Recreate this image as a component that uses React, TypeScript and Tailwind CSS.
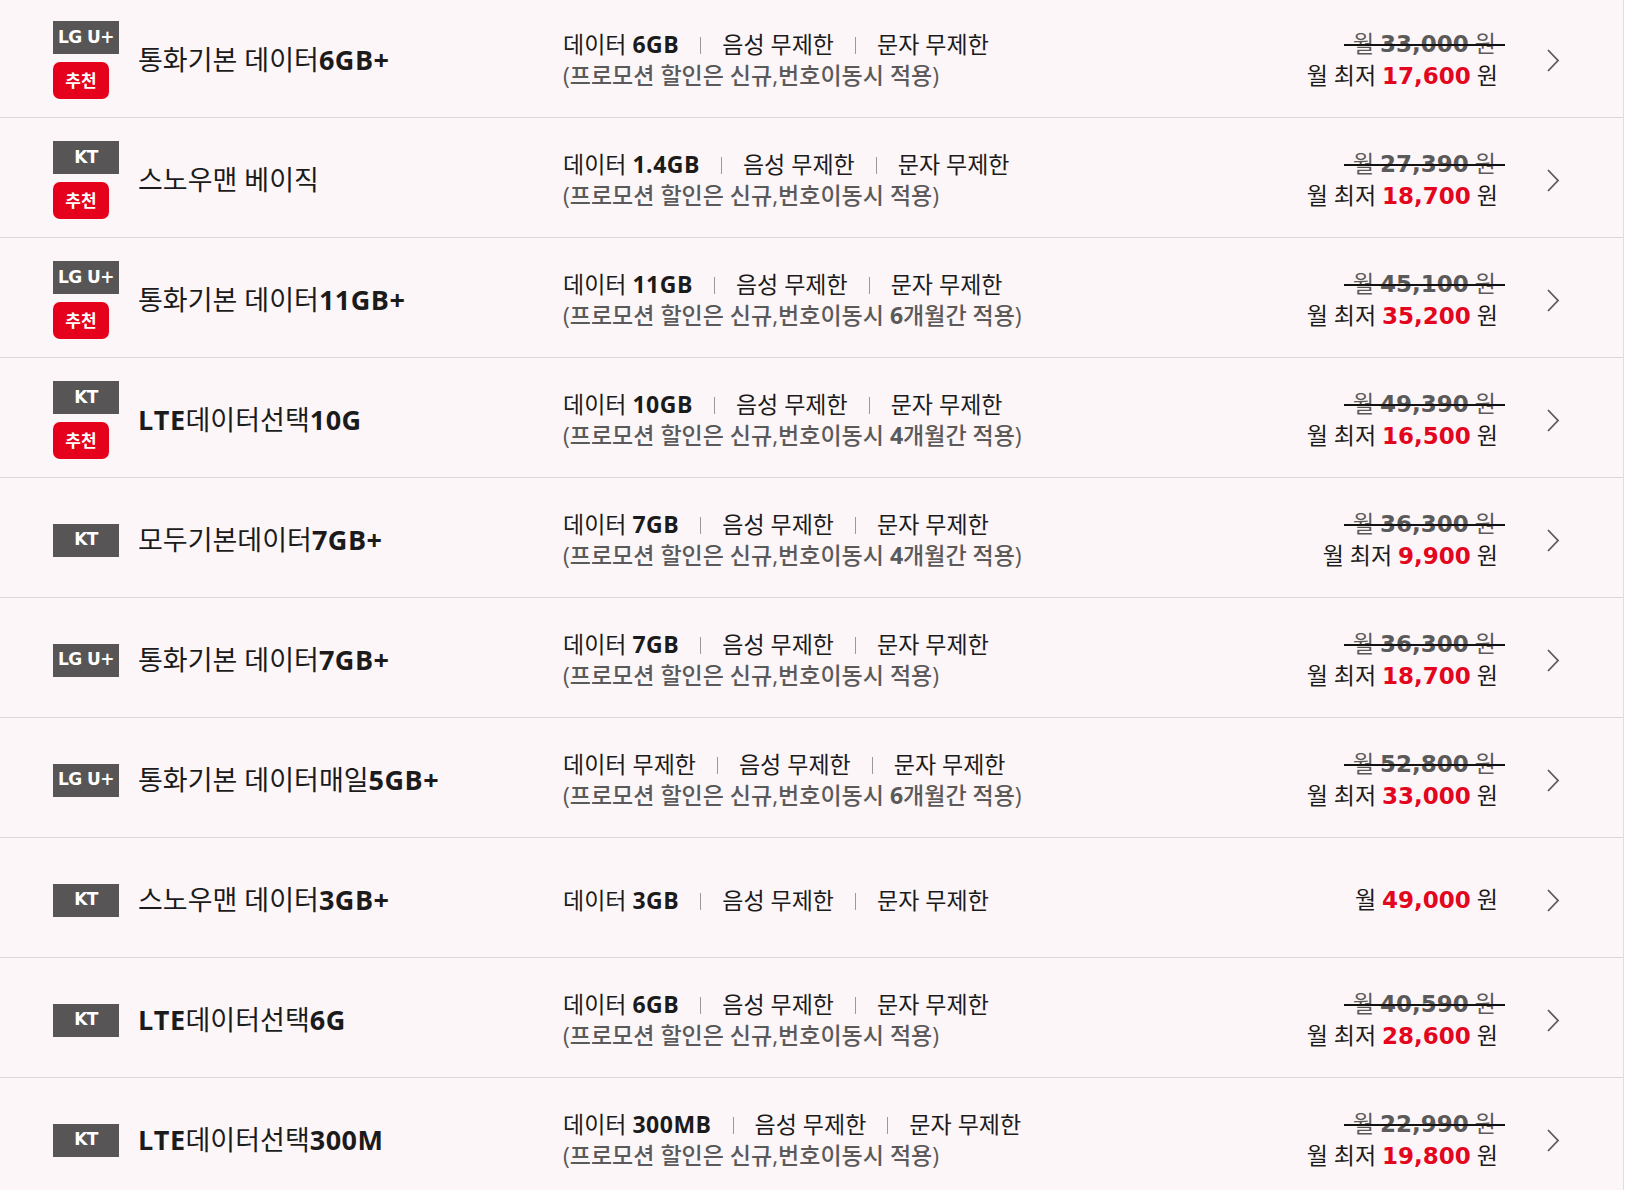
import React from "react"

type Plan = {
  carrier: "LG U+" | "KT"
  pick?: boolean
  name: string
  nameBold?: string
  namePrefix?: string
  data: string
  dataBold?: boolean
  months?: string
  note?: boolean
  oldPrice?: string
  price: string
  lowest?: boolean
}

const PLANS: Plan[] = [
  { carrier: "LG U+", pick: true, name: "통화기본 데이터", nameBold: "6GB+", data: "6GB", note: true, oldPrice: "33,000", price: "17,600", lowest: true },
  { carrier: "KT", pick: true, name: "스노우맨 베이직", data: "1.4GB", note: true, oldPrice: "27,390", price: "18,700", lowest: true },
  { carrier: "LG U+", pick: true, name: "통화기본 데이터", nameBold: "11GB+", data: "11GB", note: true, months: "6", oldPrice: "45,100", price: "35,200", lowest: true },
  { carrier: "KT", pick: true, namePrefix: "LTE", name: "데이터선택", nameBold: "10G", data: "10GB", note: true, months: "4", oldPrice: "49,390", price: "16,500", lowest: true },
  { carrier: "KT", name: "모두기본데이터", nameBold: "7GB+", data: "7GB", note: true, months: "4", oldPrice: "36,300", price: "9,900", lowest: true },
  { carrier: "LG U+", name: "통화기본 데이터", nameBold: "7GB+", data: "7GB", note: true, oldPrice: "36,300", price: "18,700", lowest: true },
  { carrier: "LG U+", name: "통화기본 데이터매일", nameBold: "5GB+", data: "무제한", dataBold: false, note: true, months: "6", oldPrice: "52,800", price: "33,000", lowest: true },
  { carrier: "KT", name: "스노우맨 데이터", nameBold: "3GB+", data: "3GB", price: "49,000" },
  { carrier: "KT", namePrefix: "LTE", name: "데이터선택", nameBold: "6G", data: "6GB", note: true, oldPrice: "40,590", price: "28,600", lowest: true },
  { carrier: "KT", namePrefix: "LTE", name: "데이터선택", nameBold: "300M", data: "300MB", note: true, oldPrice: "22,990", price: "19,800", lowest: true },
]

const FONT = "[font-family:'Open_Sans','Noto_Sans_CJK_KR',sans-serif]"
// wide bold face for the figures, close to the geometric sans of the original
const NUM = "[font-family:'DejaVu_Sans',sans-serif] font-bold"

function Sep() {
  return <span className="mx-[21px] inline-block h-[17px] w-px bg-[#9a9a9a] align-[-1px]" />
}

function PlanRow({ plan }: { plan: Plan }) {
  return (
    <div className="flex h-[120px] items-center border-b border-[#ddd5d8] pt-[5px]">
      <div className="flex w-[138px] shrink-0 flex-col items-start gap-[8px] pl-[53px]">
        <span className="flex h-[33px] w-[66px] items-center justify-center bg-[#575555] text-[17px] font-bold tracking-[-0.6px] text-white [font-family:'DejaVu_Sans',sans-serif]">
          {plan.carrier}
        </span>
        {plan.pick && (
          <span className="flex h-[37px] w-[56px] items-center justify-center rounded-[7px] bg-[#e5001c] text-[17px] font-bold text-white">
            추천
          </span>
        )}
      </div>

      <div className="w-[425px] shrink-0 text-[27px] text-[#1b1b1b]">
        {plan.namePrefix && <span className="font-bold tracking-[0.5px]">{plan.namePrefix}</span>}
        {plan.name}
        {plan.nameBold && <span className="font-bold tracking-[0.5px]">{plan.nameBold}</span>}
      </div>

      <div className="flex-1 text-[23px] leading-[31px] text-[#1b1b1b]">
        <div>
          데이터{" "}
          <span className={plan.dataBold === false ? "" : "font-bold tracking-[0.5px]"}>{plan.data}</span>
          <Sep />
          음성 무제한
          <Sep />
          문자 무제한
        </div>
        {plan.note && (
          <div className="font-medium text-[#5a5a5a]">
            (프로모션 할인은 신규,번호이동시{" "}
            {plan.months && (
              <>
                <span className="font-bold">{plan.months}</span>개월간{" "}
              </>
            )}
            적용)
          </div>
        )}
      </div>

      <div className="flex flex-col items-end text-[23px] leading-[31px]">
        {plan.oldPrice && (
          <span className="relative mr-[2px] text-[#5a5a5a]">
            월 <span className={NUM}>{plan.oldPrice}</span> 원
            <span className="absolute top-[16px] -right-[9px] -left-[9px] h-[2px] bg-[#111]" />
          </span>
        )}
        <span className="text-[#1b1b1b]">
          월 {plan.lowest && "최저 "}
          <span className={`${NUM} text-[#e3061f]`}>{plan.price}</span> 원
        </span>
      </div>

      <div className="ml-[48px] mr-[63px] flex w-[14px] items-center justify-center">
        <svg width="14" height="25" viewBox="0 0 14 25" fill="none">
          <path d="M2 2l10 10.5L2 23" stroke="#5a5a5a" strokeWidth="1.8" />
        </svg>
      </div>
    </div>
  )
}

export default function App() {
  return (
    <div className={`min-h-screen bg-white ${FONT}`}>
      <div className="-mt-[2px] w-[1624px] border-r border-[#e3dde0] bg-[#fdf6f8]">
        {PLANS.map((p, i) => (
          <PlanRow key={i} plan={p} />
        ))}
      </div>
    </div>
  )
}
